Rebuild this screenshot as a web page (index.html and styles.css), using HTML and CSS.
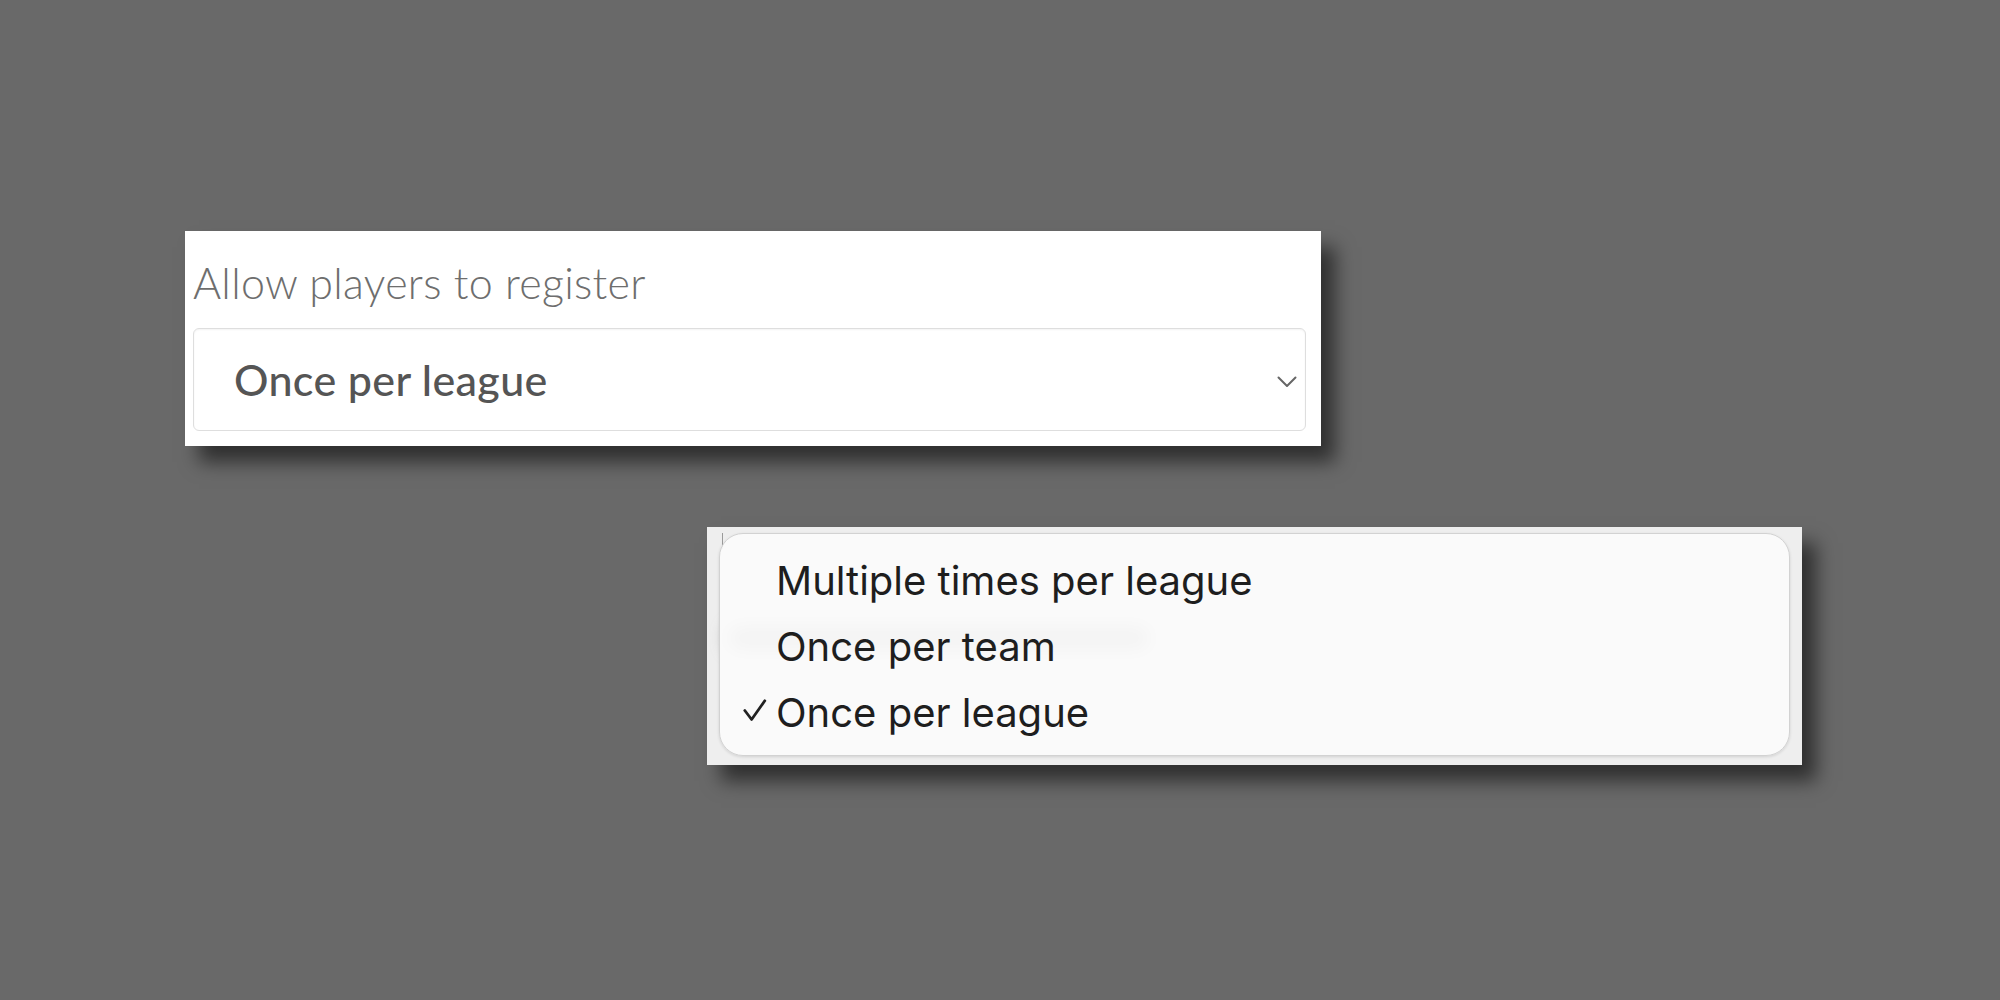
FILE: index.html
```html
<!DOCTYPE html>
<html lang="en">
<head>
<meta charset="utf-8">
<title>Allow players to register</title>
<link rel="stylesheet" href="styles.css">
</head>
<body>
<main class="stage">
  <section class="card">
    <label class="field-label">Allow players to register</label>
    <div class="select">
      <span class="select-value">Once per league</span>
      <svg class="chevron" width="20" height="12" viewBox="0 0 20 12" aria-hidden="true">
        <path d="M1.5 1.5 L10 10 L18.5 1.5" fill="none" stroke="#666" stroke-width="2" stroke-linecap="round" stroke-linejoin="round"/>
      </svg>
    </div>
  </section>

  <section class="popup">
    <div class="underlay-edge"></div>
    <div class="ghost"></div>
    <ul class="menu">
      <li class="menu-item"><span class="check"></span><span class="item-text">Multiple times per league</span></li>
      <li class="menu-item"><span class="check"></span><span class="item-text">Once per team</span></li>
      <li class="menu-item selected">
        <span class="check">
          <svg width="24" height="24" viewBox="0 0 24 24" aria-hidden="true">
            <path d="M1.8 11.5 L8.6 20.5 L21.8 1.8" fill="none" stroke="#222" stroke-width="2.8" stroke-linecap="round" stroke-linejoin="round"/>
          </svg>
        </span>
        <span class="item-text">Once per league</span>
      </li>
    </ul>
  </section>
</main>
</body>
</html>
```

FILE: styles.css
```css
html, body {
  margin: 0;
  padding: 0;
}

body {
  width: 2000px;
  height: 1000px;
  background: #696969;
  overflow: hidden;
}

.stage {
  display: flex;
  flex-direction: column;
  align-items: flex-start;
  padding: 231px 0 0 185px;
}

/* ---------- top card ---------- */
.card {
  width: 1136px;
  height: 215px;
  box-sizing: border-box;
  padding: 28px 15px 15px 8px;
  background: #ffffff;
  box-shadow: 14px 16px 18px rgba(0, 0, 0, 0.55);
  display: flex;
  flex-direction: column;
}

.field-label {
  font-family: "Lato", "Liberation Sans", sans-serif;
  font-weight: 300;
  font-size: 43px;
  letter-spacing: 0.3px;
  line-height: 48px;
  color: #6e6e6e;
  margin-bottom: 21px;
}

.select {
  height: 103px;
  box-sizing: border-box;
  border: 1px solid #dedede;
  border-radius: 6px;
  background: #ffffff;
  box-shadow: inset 0 1px 2px rgba(0, 0, 0, 0.05);
  display: flex;
  align-items: center;
  justify-content: space-between;
  padding: 0 8px 0 40px;
}

.select-value {
  font-family: "Lato", "Liberation Sans", sans-serif;
  font-weight: 500;
  font-size: 43px;
  letter-spacing: 0.35px;
  color: #555555;
  line-height: 48px;
  padding-top: 0;
}

.chevron {
  display: block;
  margin-top: 4px;
}

/* ---------- popup menu ---------- */
.popup {
  position: relative;
  margin: 81px 0 0 522px;
  width: 1095px;
  height: 238px;
  box-sizing: border-box;
  padding: 6px 12px 9px 12px;
  background: #eeeeee;
  box-shadow: 14px 16px 18px rgba(0, 0, 0, 0.55);
}

.underlay-edge {
  position: absolute;
  left: 15px;
  top: 6px;
  width: 0;
  height: 16px;
  border-left: 1px solid #9a9a9a;
}

.ghost {
  position: absolute;
  left: 22px;
  top: 100px;
  width: 420px;
  height: 22px;
  border-radius: 11px;
  background: #777777;
  filter: blur(9px);
}

.menu {
  position: relative;
  list-style: none;
  margin: 0;
  height: 100%;
  box-sizing: border-box;
  padding: 14px 0 0 0;
  border: 1px solid #d2d2d2;
  border-radius: 24px;
  background: rgba(251, 251, 251, 0.94);
  box-shadow: 0 1px 3px rgba(0, 0, 0, 0.12);
}

.menu-item {
  display: flex;
  align-items: center;
  height: 66px;
  font-family: "Inter", "Noto Sans", sans-serif;
  font-size: 40px;
  line-height: 66px;
  color: #1e1e1e;
}

.check {
  width: 56px;
  flex: 0 0 56px;
  box-sizing: border-box;
  padding-left: 23px;
  display: flex;
  align-items: center;
}

.check svg {
  display: block;
  margin-top: -4px;
}

.item-text {
  white-space: nowrap;
}
```
